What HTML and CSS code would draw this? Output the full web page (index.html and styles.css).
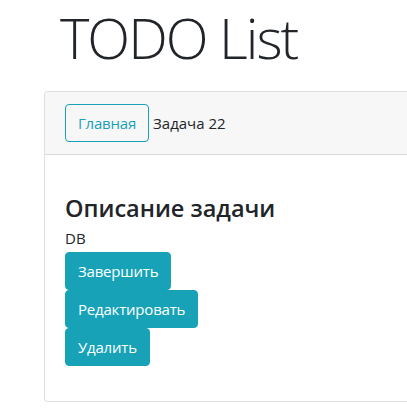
FILE: index.html
```html
<!DOCTYPE html>
<html lang="ru">
<head>
<meta charset="utf-8">
<title>TODO List</title>
<link rel="stylesheet" href="styles.css">
</head>
<body>
<div class="page">
  <h1 class="title">TODO List</h1>
  <div class="card">
    <div class="card-header">
      <a class="btn btn-outline" href="#">Главная</a>
      <span class="crumb">Задача 22</span>
    </div>
    <div class="card-body">
      <h4 class="card-title">Описание задачи</h4>
      <p class="desc">DB</p>
      <div class="actions">
        <button class="btn btn-info" type="button">Завершить</button>
        <button class="btn btn-info" type="button">Редактировать</button>
        <button class="btn btn-info" type="button">Удалить</button>
      </div>
    </div>
  </div>
</div>
</body>
</html>
```
FILE: styles.css
```css
html, body {
  margin: 0;
  padding: 0;
  overflow: hidden;
  background: #fff;
}
body {
  font-family: "Open Sans", "Noto Sans", sans-serif;
  font-size: 15px;
  line-height: 24px;
  color: #212529;
}
.page {
  padding-left: 44px;
  width: 520px;
}
.title {
  margin: 0;
  padding: 4px 0 20px 16px;
  font-size: 56px;
  font-weight: 300;
  letter-spacing: -2px;
  line-height: 1.2;
  color: #212529;
}
.card {
  border: 1px solid rgba(0, 0, 0, 0.125);
  border-radius: 4px;
  background: #fff;
}
.card-header {
  display: flex;
  align-items: center;
  gap: 4px;
  padding: 12px 20px;
  background: #f7f7f7;
  border-bottom: 1px solid rgba(0, 0, 0, 0.125);
  border-radius: 3px 3px 0 0;
}
.btn {
  display: inline-block;
  box-sizing: border-box;
  height: 38px;
  padding: 6px 12px;
  font-family: inherit;
  font-size: 15px;
  letter-spacing: -0.2px;
  line-height: 24px;
  border: 1px solid transparent;
  border-radius: 4px;
  text-decoration: none;
  cursor: pointer;
}
.btn-outline {
  color: #17a2b8;
  border-color: #17a2b8;
  background: transparent;
}
.crumb {
  color: #212529;
}
.card-body {
  padding: 20px 20px 35px;
}
.card-title {
  margin: 19px 0 4px;
  font-size: 23.5px;
  font-weight: 600;
  line-height: 1.2;
}
.desc {
  margin: 0 0 2px;
  line-height: 24px;
}
.actions {
  display: flex;
  flex-direction: column;
  align-items: flex-start;
}
.btn-info {
  color: #fff;
  background: #17a2b8;
  border-color: #17a2b8;
}
```
